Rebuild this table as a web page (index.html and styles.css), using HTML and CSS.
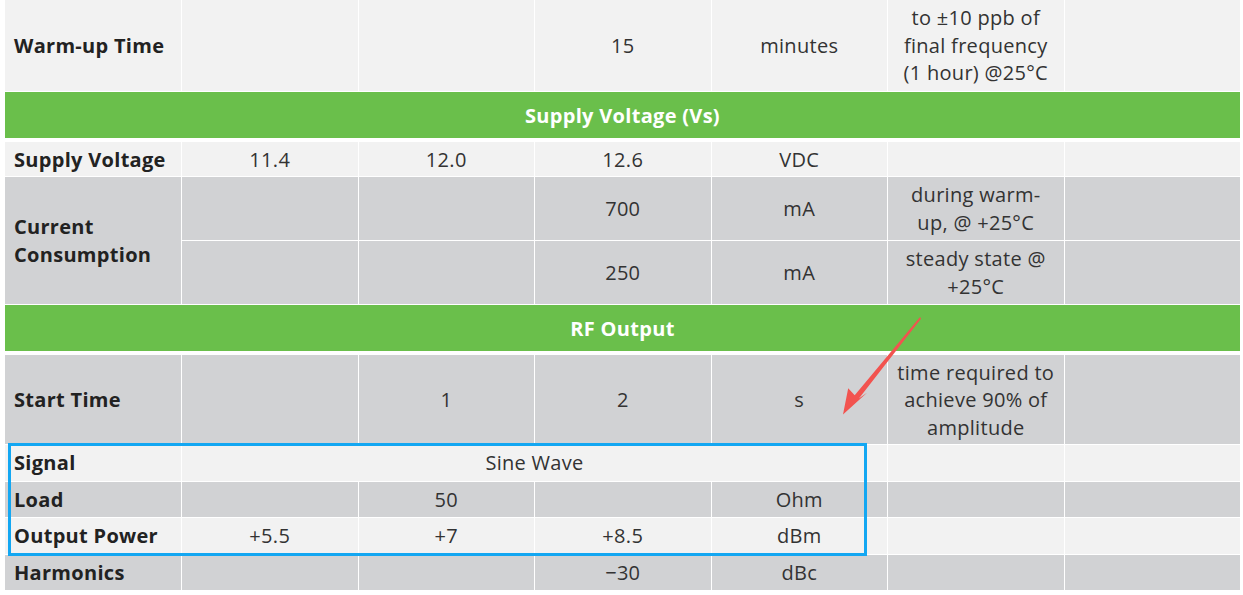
FILE: index.html
```html
<!DOCTYPE html>
<html>
<head>
<meta charset="utf-8">
<link rel="stylesheet" href="styles.css">
</head>
<body>
<div class="page">
<table class="spec">
  <tbody>
    <tr class="light first">
      <th>Warm-up Time</th><td></td><td></td><td>15</td><td>minutes</td><td>to ±10 ppb of final frequency (1 hour) @25°C</td><td></td>
    </tr>
    <tr class="section"><td colspan="7">Supply Voltage (Vs)</td></tr>
    <tr class="light after-section">
      <th>Supply Voltage</th><td>11.4</td><td>12.0</td><td>12.6</td><td>VDC</td><td></td><td></td>
    </tr>
    <tr class="dark">
      <th rowspan="2">Current Consumption</th><td></td><td></td><td>700</td><td>mA</td><td>during warm-up, @ +25°C</td><td></td>
    </tr>
    <tr class="dark">
      <td></td><td></td><td>250</td><td>mA</td><td>steady state @ +25°C</td><td></td>
    </tr>
    <tr class="section"><td colspan="7">RF Output</td></tr>
    <tr class="dark after-section">
      <th>Start Time</th><td></td><td>1</td><td>2</td><td>s</td><td>time required to achieve 90% of amplitude</td><td></td>
    </tr>
    <tr class="light">
      <th>Signal</th><td colspan="4">Sine Wave</td><td></td><td></td>
    </tr>
    <tr class="dark">
      <th>Load</th><td></td><td>50</td><td></td><td>Ohm</td><td></td><td></td>
    </tr>
    <tr class="light">
      <th>Output Power</th><td>+5.5</td><td>+7</td><td>+8.5</td><td>dBm</td><td></td><td></td>
    </tr>
    <tr class="dark">
      <th>Harmonics</th><td></td><td></td><td>−30</td><td>dBc</td><td></td><td></td>
    </tr>
  </tbody>
</table>
<div class="highlight"></div>
<svg class="arrow" width="1243" height="595" viewBox="0 0 1243 595">
  <polygon fill="#f2534f" points="920.5,317.5 921,318.8 858.9,398.6 867.3,392.6 843,414.5 848.2,388.3 854.7,395.3 919.6,317.6"/>
</svg>
</div>
</body>
</html>
```

FILE: styles.css
```css
html, body {
  margin: 0;
  padding: 0;
  background: #ffffff;
}
.page {
  position: relative;
  width: 1243px;
  height: 595px;
  overflow: hidden;
  padding-left: 5px;
  box-sizing: border-box;
}
.spec {
  width: 1236px;
  table-layout: fixed;
  border-collapse: collapse;
  font-family: "Open Sans", "Liberation Sans", sans-serif;
  font-size: 20px;
  line-height: 27.5px;
  letter-spacing: 0.3px;
  color: #333333;
}
.spec th,
.spec td {
  border: 1px solid #ffffff;
  padding: 4px 9px;
  text-align: center;
  vertical-align: middle;
  font-weight: 400;
}
.spec .first th,
.spec .first td {
  border-top: 0;
  padding-top: 4px;
  padding-bottom: 4.5px;
}
.spec .after-section th,
.spec .after-section td {
  padding-top: 3.5px;
  padding-bottom: 3px;
}
.spec th:first-child,
.spec td:first-child {
  border-left: 0;
}
.spec th {
  text-align: left;
  font-weight: 700;
  color: #222222;
}
.light th,
.light td {
  background: #f2f2f2;
}
.dark th,
.dark td {
  background: #d1d2d4;
}
.section td {
  background: #6abf4b;
  color: #ffffff;
  font-weight: 700;
  padding: 10px 10px 8.5px;
  border-bottom: 4px solid #ffffff;
}
.highlight {
  position: absolute;
  left: 8px;
  top: 443px;
  width: 853px;
  height: 107px;
  border: 3px solid #13a7f2;
}
.arrow {
  position: absolute;
  left: 0;
  top: 0;
}
```
